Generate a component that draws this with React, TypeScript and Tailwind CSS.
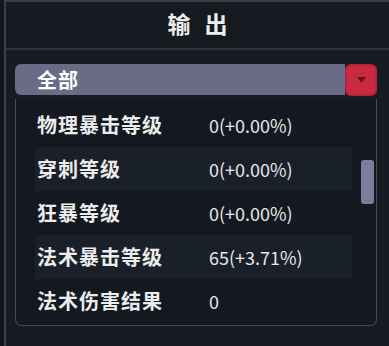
import React from 'react'

const rows = [
  { label: '物理暴击等级', value: '0(+0.00%)' },
  { label: '穿刺等级', value: '0(+0.00%)' },
  { label: '狂暴等级', value: '0(+0.00%)' },
  { label: '法术暴击等级', value: '65(+3.71%)' },
  { label: '法术伤害结果', value: '0' },
]

const cjk = { fontFamily: '"Noto Sans CJK SC", "Noto Sans", sans-serif' }

export default function App() {
  return (
    <div className="w-[389px] h-[346px] bg-[#12161c] overflow-hidden" style={cjk}>
      <div className="h-full ml-[4px] border-l-2 border-t-2 border-[#3b3f47] bg-[#171b22] flex flex-col">
        {/* Header */}
        <div className="h-[48px] flex items-center justify-center border-b-2 border-[#2f343c] bg-[#151a20]">
          <span className="text-[23px] font-bold text-[#ededed] tracking-[14px] pl-[14px] mt-[-4px]">输出</span>
        </div>

        <div className="pl-[9px] pr-[12px] pt-[14px]">
          {/* Dropdown */}
          <div className="flex items-center h-[31px]">
            <div className="flex-1 h-full flex items-center bg-[#6a6b87] rounded-l-[6px] pl-[22px]">
              <span className="text-[20px] font-bold text-white leading-none tracking-[1px]">全部</span>
            </div>
            <div className="w-[32px] h-[32px] rounded-[6px] bg-[#c92a40] flex items-center justify-center shadow-[inset_0_0_3px_rgba(0,0,0,0.4)]">
              <svg width="9" height="6" viewBox="0 0 9 6">
                <path d="M0 0 L9 0 L4.5 6 Z" fill="#6b0f1c" />
              </svg>
            </div>
          </div>

          {/* Panel */}
          <div className="relative mt-[4px] h-[227px] border border-t-0 border-[#4a4e57] rounded-b-[7px] bg-[#141921] pl-[19px] pr-[24px] pt-[4px]">
            {rows.map((row, i) => (
              <div
                key={row.label}
                className={`h-[44px] flex items-center ${i % 2 === 1 ? 'bg-[#19202a]' : ''}`}
              >
                <span className="w-[174px] pl-[2px] text-[20px] font-bold text-[#ececec] leading-none tracking-[1px]">
                  {row.label}
                </span>
                <span className="text-[18px] text-[#e6e6e6] leading-none">{row.value}</span>
              </div>
            ))}
            {/* Scrollbar thumb */}
            <div className="absolute right-[2px] top-[61px] w-[13px] h-[44px] rounded-[3px] bg-[#7a7e9c]" />
          </div>
        </div>
      </div>
    </div>
  )
}
